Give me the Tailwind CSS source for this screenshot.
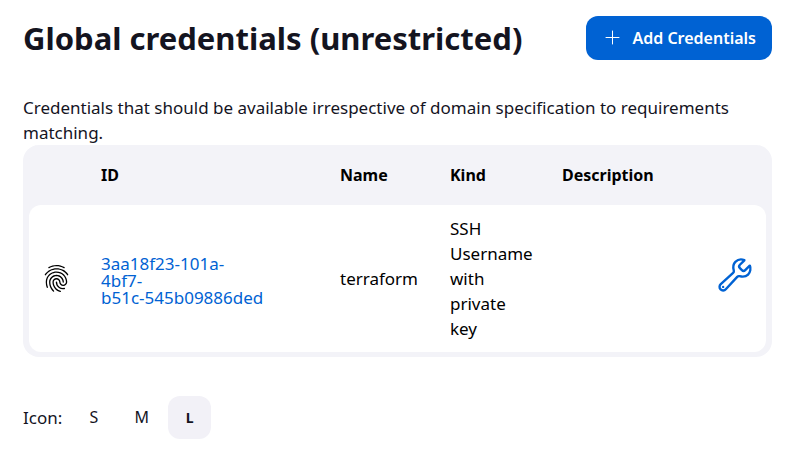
<!DOCTYPE html>
<html lang="en">
<head>
<meta charset="utf-8">
<title>Global credentials (unrestricted)</title>
<script src="https://cdn.jsdelivr.net/npm/@tailwindcss/browser@4"></script>
</head>
<body class="bg-white font-['Noto_Sans',sans-serif] text-[17px] leading-[25px] text-[#14141f]">
<main class="px-[23px] pt-4 pb-7">
  <header class="flex items-center justify-between">
    <h1 class="text-[31px] leading-11 font-bold">Global credentials (unrestricted)</h1>
    <button type="button" class="flex h-11 items-center gap-2 rounded-xl bg-[#0062d3] px-4 text-[16px] font-semibold whitespace-nowrap text-white">
      <svg class="size-[22px]" viewBox="0 0 22 22" fill="none" stroke="currentColor" stroke-linecap="round" aria-hidden="true"><path d="M10.500 4v13M4 10.500h13"/></svg>
      Add Credentials
    </button>
  </header>
  <p class="mt-[35px]">Credentials that should be available irrespective of domain specification to requirements matching.</p>
  <table class="w-full table-fixed border-separate border-spacing-0 rounded-2xl border-6 border-t-0 border-b-5 border-[#f3f3f8] bg-[#f3f3f8] text-left text-black">
    <colgroup>
      <col class="w-[60px]"><col class="w-[239px]"><col class="w-[110px]"><col class="w-[112px]"><col><col class="w-[62px]">
    </colgroup>
    <thead>
      <tr class="h-[60px] text-[16px]">
        <td></td>
        <th scope="col" class="px-3 font-bold">ID</th>
        <th scope="col" class="px-3 font-bold">Name</th>
        <th scope="col" class="px-3 font-bold">Kind</th>
        <th scope="col" class="px-3 font-bold">Description</th>
        <td></td>
      </tr>
    </thead>
    <tbody>
      <tr>
        <td class="rounded-l-xl bg-white pl-[13px]">
          <svg class="size-[29px]" viewBox="0 0 512 512" fill="currentColor" role="img" aria-label="SSH Username with private key"><path d="M390.420 75.280a10.450 10.450 0 01-5.320-1.440C340.720 50.080 302.350 40 256.350 40c-45.770 0-89.230 11.280-128.760 33.840C122 77 115.110 74.800 111.870 69a12.400 12.400 0 014.630-16.320A281.810 281.810 0 01256.350 16c49.230 0 92.230 11.280 139.390 36.480a12 12 0 014.850 16.080 11.300 11.300 0 01-10.170 6.720zm-330.790 126a11.730 11.730 0 01-6.700-2.160 12.260 12.260 0 01-2.780-16.800c22.890-33.600 52-60 86.690-78.480 72.580-38.840 165.510-39.120 238.320-.240 34.680 18.480 63.800 44.640 86.690 78a12.290 12.290 0 01-2.780 16.800 11.260 11.260 0 01-16.180-2.880c-20.800-30.240-47.150-54-78.360-70.560-66.340-35.280-151.180-35.280-217.290.240-31.440 16.800-57.790 40.800-78.590 71a10 10 0 01-9.020 5.080zM204 491a10.660 10.660 0 01-8.090-3.600C175.750 466.480 165 453 149.550 424c-16-29.520-24.270-65.520-24.270-104.160 0-71.280 58.710-129.360 130.840-129.360S387 248.560 387 319.840a11.560 11.560 0 11-23.110 0c0-58.080-48.320-105.360-107.720-105.360S148.400 261.760 148.400 319.840c0 34.560 7.390 66.480 21.490 92.400 14.800 27.600 25 39.360 42.770 58.080a12.670 12.670 0 010 17 12.440 12.440 0 01-8.660 3.680zm165.750-44.400c-27.510 0-51.780-7.200-71.660-21.360a129.100 129.100 0 01-55-105.360 11.570 11.570 0 1123.120 0 104.280 104.280 0 0044.840 85.440c16.410 11.520 35.600 17 58.720 17a147.410 147.410 0 0024-2.400c6.240-1.200 12.250 3.120 13.400 9.840a11.920 11.920 0 01-9.470 13.920 152.280 152.280 0 01-27.950 2.880zM323.380 496a13 13 0 01-3-.480c-36.760-10.560-60.800-24.720-86-50.400-32.370-33.360-50.160-77.760-50.160-125.280 0-38.880 31.900-70.560 71.190-70.560s71.200 31.680 71.200 70.560c0 25.680 21.500 46.560 48.080 46.560s48.080-20.880 48.080-46.560c0-90.480-75.130-163.920-167.590-163.920-65.650 0-125.750 37.920-152.790 96.720-9 19.440-13.640 42.240-13.640 67.200 0 18.720 1.610 48.240 15.480 86.640 2.320 6.240-.690 13.200-6.700 15.360a11.340 11.340 0 01-14.790-7 276.390 276.390 0 01-16.880-95c0-28.800 5.320-55 15.720-77.760 30.750-67 98.940-110.400 173.600-110.400 105.180 0 190.710 84.240 190.710 187.920 0 38.880-31.900 70.560-71.200 70.560s-71.200-31.680-71.200-70.560c.010-25.680-21.490-46.560-48.080-46.560s-48.080 20.880-48.080 46.560c0 41 15.260 79.440 43.230 108.240 22 22.560 43 35 75.590 44.160 6.240 1.680 9.710 8.400 8.090 14.640a11.390 11.390 0 01-10.880 9.360z"/></svg>
        </td>
        <td class="bg-white px-3 pt-1 leading-[17px]"><a href="#" class="block text-[#0062d3]">3aa18f23-101a-<br>4bf7-<br>b51c-545b09886ded</a></td>
        <td class="bg-white px-3">terraform</td>
        <td class="bg-white py-[11px] pr-4 pl-3">SSH Username with private key</td>
        <td class="bg-white px-3"></td>
        <td class="rounded-r-xl bg-white pr-3">
          <a href="#" aria-label="Update credentials" class="flex justify-end pb-2 text-[#0062d3]">
            <svg class="size-[38px]" viewBox="0 0 512 512" fill="none" stroke="currentColor" stroke-width="32" stroke-linecap="round" stroke-miterlimit="10"><path d="M393.870 190a32.100 32.100 0 01-45.250 0l-26.570-26.570a32.090 32.090 0 010-45.260L382.190 58a1 1 0 00-.300-1.640c-38.820-16.640-89.150-8.160-121.110 23.570-30.580 30.350-32.320 76-21.120 115.840a31.930 31.930 0 01-9.060 32.080L64 380a48.170 48.170 0 1068 68l153.860-167a31.930 31.930 0 0131.600-9.130c39.540 10.590 84.540 8.600 114.720-21.190 32.490-32 39.500-88.560 23.750-120.930a1 1 0 00-1.600-.260z"/><circle cx="96" cy="416" r="16" fill="currentColor" stroke="none"/></svg>
          </a>
        </td>
      </tr>
    </tbody>
  </table>
  <div class="mt-[39px] flex items-center" role="group" aria-label="Icon size">
    <span class="mr-[10px]">Icon:</span>
    <div class="flex gap-[5px] text-[16px]">
      <button type="button" class="size-[43px] rounded-xl">S</button>
      <button type="button" class="size-[43px] rounded-xl">M</button>
      <button type="button" aria-pressed="true" class="size-[43px] rounded-xl bg-[#f2f1f7] text-[14px] font-bold">L</button>
    </div>
  </div>
</main>
</body>
</html>
